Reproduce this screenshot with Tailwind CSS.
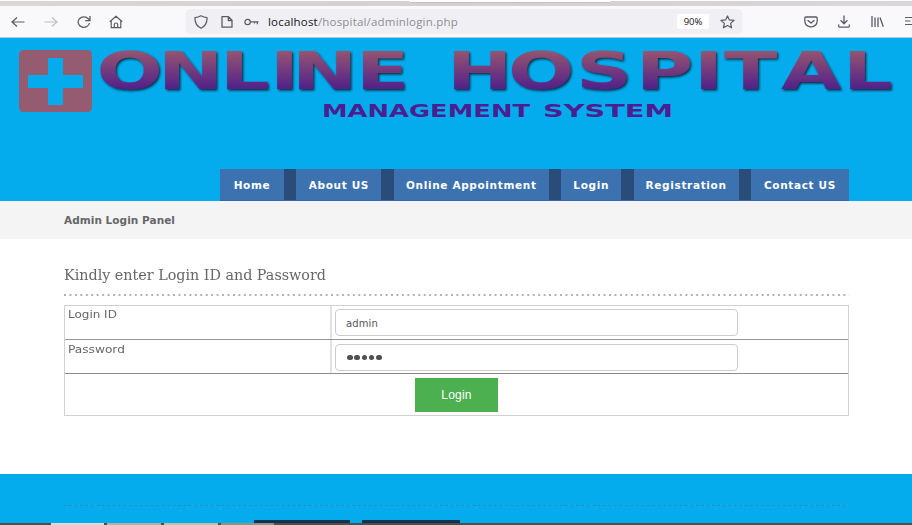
<!DOCTYPE html>
<html lang="en">
<head>
<meta charset="utf-8">
<title>Online Hospital</title>
<script src="https://cdn.jsdelivr.net/npm/@tailwindcss/browser@4"></script>
</head>
<body class="w-[912px] h-[525px] overflow-hidden bg-white font-['DejaVu_Sans',sans-serif] text-[#666]">
<div class="flex flex-col h-[525px]">
  <!-- tab strip -->
  <div class="h-[6px] shrink-0 flex border-t border-white bg-linear-to-r from-[#ddd5d3] via-[#d5cfce] to-[#d9d7da]">
    <div class="ml-[409px] w-[202px] h-[2px] bg-white rounded-b-sm border-b border-[#c4c0c2]"></div>
  </div>
  <!-- browser toolbar -->
  <div class="h-8 shrink-0 flex items-center bg-[#f9f9fb] border-b border-[#b5c8d3] text-[#5b5b66]">
    <svg class="ml-[11px] shrink-0" width="14" height="14" viewBox="0 0 14 14" fill="none" stroke="currentColor" stroke-width="1.2"><path d="M13.5 7H1M6 2.5L1 7l5 4.5"/></svg>
    <svg class="ml-[19px] shrink-0 text-[#bfbfc6]" width="14" height="14" viewBox="0 0 14 14" fill="none" stroke="currentColor" stroke-width="1.2"><path d="M.5 7H13M8 2.5L13 7l-5 4.5"/></svg>
    <svg class="ml-[19px] shrink-0" width="14" height="14" viewBox="0 0 14 14" fill="none" stroke="currentColor" stroke-width="1.3"><path d="M12.5 8A5.7 5.2 0 1 1 11.3 3.8L12.8 5.3M13 1v4.6H8.2"/></svg>
    <svg class="ml-[18px] shrink-0" width="14" height="14" viewBox="0 0 14 14" fill="none" stroke="currentColor" stroke-width="1.2" stroke-linejoin="round"><path d="M.8 6.8L7 1.2l6.200 5.600M2.200 6v6.700h9.600V6M5.300 12.500V9.400Q5.300 8 7 8t1.700 1.400v3.100"/></svg>
    <div class="ml-[63px] w-[556px] h-[25px] shrink-0 rounded bg-[#f0f0f4] flex items-center">
      <svg class="ml-2 shrink-0" width="14" height="14" viewBox="0 0 14 14" fill="none" stroke="currentColor" stroke-width="1.200" stroke-linejoin="round"><path d="M7 .8Q10 2.300 13 2.600Q13.500 10 7 13.200Q.5 10 1 2.600Q4 2.300 7 .8z"/></svg>
      <svg class="ml-[13px] shrink-0" width="12" height="14" viewBox="0 0 12 14" fill="none" stroke="currentColor" stroke-width="1.300" stroke-linejoin="round"><path d="M1 1.700h6.500l3.500 3.500v7H1zM7.300 1.700v3.800H11"/></svg>
      <svg class="ml-[11px] shrink-0" width="15" height="10" viewBox="0 0 15 10" fill="none" stroke="currentColor" stroke-width="1.200"><circle cx="3.600" cy="5" r="2.700"/><path d="M6.300 4.800H14.500M10.500 5v1.500M13.300 5v2.200"/></svg>
      <div class="ml-[9px] w-[200px] whitespace-nowrap font-['Open_Sans',sans-serif] text-[11.5px] tracking-[0.19px] leading-4 text-[#8e8e96]"><span class="text-[#15141a]">localhost</span>/hospital/adminlogin.php</div>
      <div class="ml-auto w-8 h-[15px] rounded-[2px] bg-white text-[9.5px] leading-[16px] text-center text-[#15141a] font-['Open_Sans',sans-serif] font-medium">90%</div>
      <svg class="ml-[11px] mr-[7px] shrink-0" width="15" height="14" viewBox="0 0 15 14" fill="none" stroke="currentColor" stroke-width="1.200" stroke-linejoin="round"><path d="M7.500 1l1.900 3.900 4.700.5-3.500 3 1 4.400-4.100-2.300-4.100 2.300 1-4.400-3.500-3 4.700-.5z"/></svg>
    </div>
    <svg class="ml-[62px] shrink-0" width="14" height="12" viewBox="0 0 14 12" fill="none" stroke="currentColor" stroke-width="1.300" stroke-linejoin="round" stroke-linecap="round"><path d="M2 1h10Q13.200 1 13.200 2.200V5Q12.800 10.600 7 10.800Q1.200 10.600.8 5V2.200Q.8 1 2 1zM4 4.500l3 2.600 3-2.600"/></svg>
    <svg class="ml-[20px] shrink-0" width="12" height="13" viewBox="0 0 12 13" fill="none" stroke="currentColor" stroke-width="1.300" stroke-linejoin="round"><path d="M6 .5v8M2.600 5.200L6 8.700l3.400-3.500M.7 9.500v1.700q0 1 1 1h8.600q1 0 1-1V9.500"/></svg>
    <svg class="ml-[21px] shrink-0" width="13" height="13" viewBox="0 0 13 13" fill="none" stroke="currentColor" stroke-width="1.300"><path d="M1 1v11M4 2.500V12M7 2.500V12M9 2.500l3.300 9.300"/></svg>
    <svg class="ml-5 shrink-0" width="8" height="11" viewBox="0 0 8 11" fill="none" stroke="currentColor" stroke-width="1.200"><path d="M1 1.500h7M1 5h5.500M1 8.500h7"/></svg>
  </div>
  <!-- banner -->
  <header class="h-[163px] shrink-0 flex flex-col justify-between bg-[#04acee]">
    <svg width="912" height="92" viewBox="0 38 912 92" class="block shrink-0" font-family="DejaVu Sans, sans-serif" font-weight="bold">
      <defs>
        <linearGradient id="g" gradientUnits="userSpaceOnUse" x1="0" y1="48" x2="0" y2="92"><stop offset="0" stop-color="#9b586e"/><stop offset="1" stop-color="#4b1d8d"/></linearGradient>
        <filter id="s" x="-5%" y="-20%" width="110%" height="150%"><feDropShadow dx="1.300" dy="1.500" stdDeviation=".8" flood-color="#08131f" flood-opacity=".9"/></filter>
      </defs>
      <path fill="#955b70" fill-rule="evenodd" d="M24 50h63q5 0 5 5v52q0 5-5 5H24q-5 0-5-5V55q0-5 5-5zM48 58v17H28v13h20v17h15V88h20V75H63V58z"/>
      <g filter="url(#s)"><g transform="scale(1.500 1)" font-size="52" fill="url(#g)">
        <text y="89" x="64.300 105.300 146.700 180 194.700 237.300">ONLINE</text>
        <text y="89" x="298 338.700 384 424 462.700 482.700 520.700 562">HOSPITAL</text>
      </g></g>
      <g font-size="18" fill="#4b1e91">
        <text x="322" y="116.500" textLength="208" lengthAdjust="spacingAndGlyphs">MANAGEMENT</text>
        <text x="543" y="116.500" textLength="130" lengthAdjust="spacingAndGlyphs">SYSTEM</text>
      </g>
    </svg>
    <nav class="ml-[220px] w-[629px] h-8 flex justify-between bg-[#294d78] border-b border-[#3668a8] text-white font-bold text-[10.5px] tracking-[0.65px] leading-[33px] text-center whitespace-nowrap">
      <a class="w-[64px] bg-[#3d72b1]">Home</a>
      <a class="w-[85px] bg-[#3d72b1]">About US</a>
      <a class="w-[155px] bg-[#3d72b1]">Online Appointment</a>
      <a class="w-[60px] bg-[#3d72b1]">Login</a>
      <a class="w-[105px] bg-[#3d72b1]">Registration</a>
      <a class="w-[98px] bg-[#3d72b1]">Contact US</a>
    </nav>
  </header>
  <div class="h-[38px] shrink-0 bg-[#f4f4f4] pl-16 text-[10.5px] tracking-[0.05px] leading-[39px] font-bold">Admin Login Panel</div>
  <main class="mx-[63px] h-[235px] shrink-0 pt-6">
    <h1 class="h-[24px] pl-px leading-6 whitespace-nowrap"><span class="inline-block origin-left scale-x-[1.022] font-['DejaVu_Serif',serif] text-[14px]">Kindly enter Login ID and Password</span></h1>
    <svg class="block mt-[7px]" width="786" height="2"><path d="M1 1H786" stroke="#999" stroke-width="1.300" stroke-dasharray="2 3.450"/></svg>
    <div class="mt-[9px] h-[111px] border border-[#d0d0d0] text-[10.5px] leading-4 flex flex-col ml-px">
      <div class="h-[34px] shrink-0 flex border-b border-[#959595]">
        <div class="w-[267px] pl-[3px] border-r-2 border-[#e2e2e2]"><span class="inline-block origin-left scale-x-[1.140]">Login ID</span></div>
        <div class="ml-[3px] mt-[3px] w-[403px] h-[27px] rounded-[4px] border border-[#ccc] pl-[10px] leading-[27px] text-[10px] tracking-[0.1px] text-[#555]">admin</div>
      </div>
      <div class="h-[34px] shrink-0 flex border-b border-[#8c8c8c]">
        <div class="w-[267px] pl-[3px] pt-px border-r-2 border-[#e2e2e2]"><span class="inline-block origin-left scale-x-[1.160]">Password</span></div>
        <div class="ml-[3px] mt-[4px] w-[403px] h-[27px] rounded-[4px] border border-[#ccc] pl-[11px] flex items-center gap-[1.800px]">
          <i class="size-[5.500px] rounded-full bg-[#505050]"></i><i class="size-[5.500px] rounded-full bg-[#505050]"></i><i class="size-[5.500px] rounded-full bg-[#505050]"></i><i class="size-[5.500px] rounded-full bg-[#505050]"></i><i class="size-[5.500px] rounded-full bg-[#505050]"></i>
        </div>
      </div>
      <div class="flex-1 flex justify-center pt-[4px]"><button class="w-[83px] h-[34px] bg-[#4caf50] text-white text-[12px] font-['Liberation_Sans',sans-serif] tracking-[0.200px]">Login</button></div>
    </div>
  </main>
  <!-- footer -->
  <footer class="flex-1 flex flex-col bg-[#04acee]">
    <svg class="block mt-[30px] ml-[63px]" width="786" height="2"><path d="M1 1.500H786" stroke="#457f9c" stroke-width="1" stroke-dasharray="2 3.450"/></svg>
    <div class="mt-auto h-[3px] flex pl-[254px] gap-3"><div class="w-[96px] bg-[#12304f]"></div><div class="w-[98px] bg-[#12304f]"></div></div>
    <div class="h-[2px] flex bg-[#46514a] pl-[51px] gap-[3px]"><div class="w-[53px] bg-[#d5ddd8]"></div><div class="w-[54px] bg-[#a9b6a8]"></div><div class="w-[54px] bg-[#b8c3ae]"></div><div class="w-[53px] bg-[#8b9786]"></div></div>
  </footer>
</div>
</body>
</html>
